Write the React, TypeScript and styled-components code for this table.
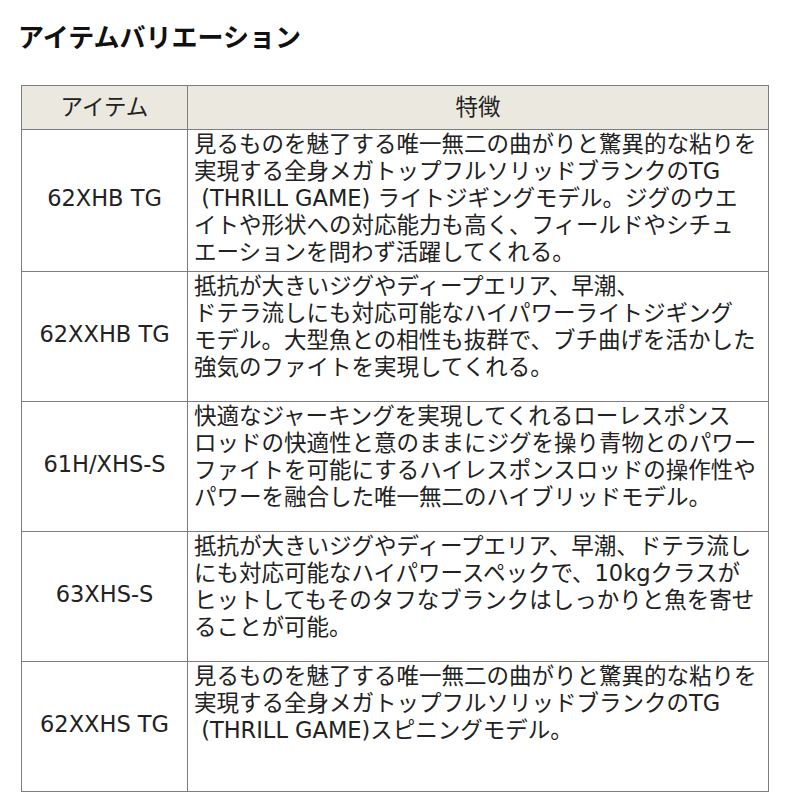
import React from "react";
import styled, { createGlobalStyle } from "styled-components";

const Global = createGlobalStyle`
  html, body { margin: 0; padding: 0; background: #fff; }
  body { font-family: "DejaVu Sans", "Noto Sans CJK JP", sans-serif; color: #1f1f1f; }
`;

const Page = styled.div`
  width: 800px;
  height: 800px;
  padding: 20px 0 0 18px;
  box-sizing: border-box;
`;

const Title = styled.h2`
  margin: 0 0 34px 0;
  font-family: "Noto Sans CJK JP", sans-serif;
  font-weight: 700;
  font-size: 26px;
  line-height: 31px;
  letter-spacing: 0px;
  color: #111;
`;

const Table = styled.table`
  margin-left: 3px;
  width: 748px;
  border-collapse: collapse;
  table-layout: fixed;
  font-size: 22.5px;
`;

const HeadCell = styled.th<{ $w?: number }>`
  width: ${(p) => (p.$w ? `${p.$w}px` : "auto")};
  height: 43px;
  background: #ebe8df;
  border: 1px solid #7d7d7d;
  font-weight: 400;
  text-align: center;
  vertical-align: middle;
  padding: 0;
  line-height: 27px;
  color: #222;
`;

const Row = styled.tr`
  height: 130px;
`;

const NameCell = styled.td`
  border: 1px solid #7d7d7d;
  text-align: center;
  vertical-align: middle;
  padding: 0 0 4px 0;
  line-height: 27px;
  color: #222;
`;

const DescCell = styled.td`
  border: 1px solid #7d7d7d;
  vertical-align: top;
  padding: 1px 0 5px 6px;
  line-height: 27px;
  white-space: pre;
  color: #222;
`;

const rows: { name: string; lines: string[] }[] = [
  {
    name: "62XHB TG",
    lines: [
      "見るものを魅了する唯一無二の曲がりと驚異的な粘りを",
      "実現する全身メガトップフルソリッドブランクのTG",
      " (THRILL GAME) ライトジギングモデル。ジグのウエ",
      "イトや形状への対応能力も高く、フィールドやシチュ",
      "エーションを問わず活躍してくれる。",
    ],
  },
  {
    name: "62XXHB TG",
    lines: [
      "抵抗が大きいジグやディープエリア、早潮、",
      "ドテラ流しにも対応可能なハイパワーライトジギング",
      "モデル。大型魚との相性も抜群で、ブチ曲げを活かした",
      "強気のファイトを実現してくれる。",
    ],
  },
  {
    name: "61H/XHS-S",
    lines: [
      "快適なジャーキングを実現してくれるローレスポンス",
      "ロッドの快適性と意のままにジグを操り青物とのパワー",
      "ファイトを可能にするハイレスポンスロッドの操作性や",
      "パワーを融合した唯一無二のハイブリッドモデル。",
    ],
  },
  {
    name: "63XHS-S",
    lines: [
      "抵抗が大きいジグやディープエリア、早潮、ドテラ流し",
      "にも対応可能なハイパワースペックで、10kgクラスが",
      "ヒットしてもそのタフなブランクはしっかりと魚を寄せ",
      "ることが可能。",
    ],
  },
  {
    name: "62XXHS TG",
    lines: [
      "見るものを魅了する唯一無二の曲がりと驚異的な粘りを",
      "実現する全身メガトップフルソリッドブランクのTG",
      " (THRILL GAME)スピニングモデル。",
    ],
  },
];

export default function App() {
  return (
    <Page>
      <Global />
      <Title>アイテムバリエーション</Title>
      <Table>
        <thead>
          <tr>
            <HeadCell $w={165}>アイテム</HeadCell>
            <HeadCell>特徴</HeadCell>
          </tr>
        </thead>
        <tbody>
          {rows.map((r) => (
            <Row key={r.name}>
              <NameCell>{r.name}</NameCell>
              <DescCell>{r.lines.join("\n")}</DescCell>
            </Row>
          ))}
        </tbody>
      </Table>
    </Page>
  );
}
